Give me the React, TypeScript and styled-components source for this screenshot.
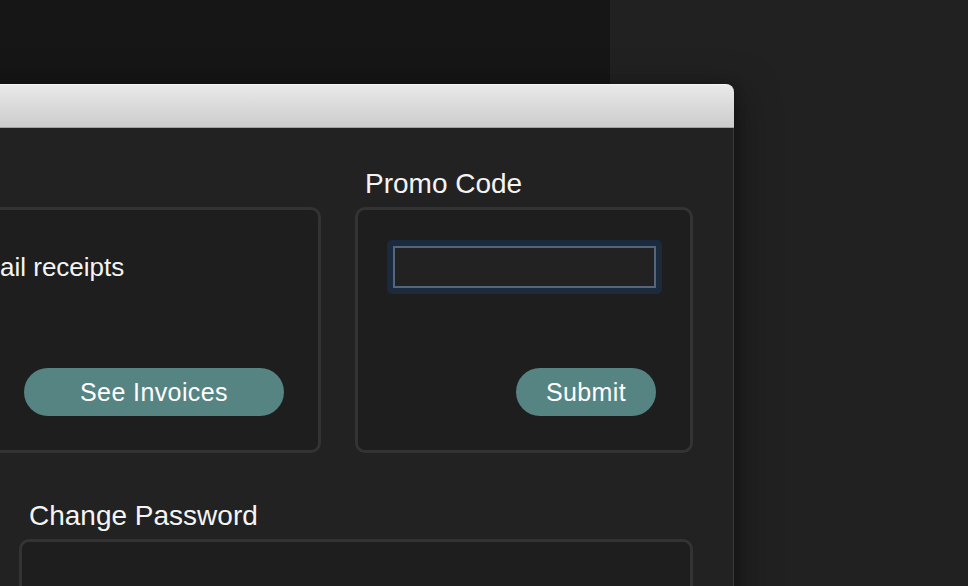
import React from "react";
import styled, { createGlobalStyle } from "styled-components";

const GlobalStyle = createGlobalStyle`
  html, body {
    margin: 0;
    padding: 0;
    width: 100%;
    height: 100%;
    overflow: hidden;
    background: #212121;
  }
  body {
    font-family: "Liberation Sans", Arial, Helvetica, sans-serif;
  }
  #root {
    width: 100%;
    height: 100%;
  }
  * { box-sizing: border-box; }
`;

const Desktop = styled.div`
  position: relative;
  width: 968px;
  height: 586px;
  display: flex;
  overflow: hidden;
`;

const BackPane = styled.div<{ $tone: string; $width?: string }>`
  background: ${(p) => p.$tone};
  flex: ${(p) => (p.$width ? `0 0 ${p.$width}` : "1 1 auto")};
  height: 100%;
`;

const Window = styled.div`
  position: absolute;
  top: 84px;
  left: -153px;
  width: 887px;
  height: 560px;
  display: flex;
  flex-direction: column;
  border-radius: 8px 8px 0 0;
  box-shadow: 6px 8px 40px rgba(0, 0, 0, 0.35), 2px 0 10px rgba(0, 0, 0, 0.25);
`;

const TitleBar = styled.div`
  height: 44px;
  flex: 0 0 auto;
  border-radius: 8px 8px 0 0;
  background: linear-gradient(#e9e9e9, #d9d9d9 55%, #cdcdcd);
  border-top: 1px solid #f4f4f4;
  border-bottom: 1px solid #a3a3a3;
`;

const Body = styled.div`
  flex: 1 1 auto;
  background: #222222;
  border-right: 1px solid #3a3a3a;
  padding: 40px 40px 0 40px;
  display: flex;
  flex-direction: column;
`;

const TopRow = styled.div`
  display: grid;
  grid-template-columns: 1fr 338px;
  column-gap: 34px;
`;

const Section = styled.section<{ $indent?: number; $top?: number }>`
  display: flex;
  flex-direction: column;
  margin-left: ${(p) => p.$indent ?? 0}px;
  margin-top: ${(p) => p.$top ?? 0}px;
`;

const Label = styled.h2`
  margin: 0 0 7px 0;
  padding-left: 10px;
  height: 32px;
  font-size: 28px;
  line-height: 32px;
  font-weight: 400;
  color: #f4f4f4;
  white-space: nowrap;
`;

const Card = styled.div<{ $height?: number }>`
  height: ${(p) => (p.$height ? `${p.$height}px` : "auto")};
  background: #1e1e1e;
  border: 3px solid #333333;
  border-radius: 10px;
  padding: 36px 34px 34px 35px;
  display: flex;
  flex-direction: column;
  justify-content: space-between;
`;

const OptionRow = styled.label`
  height: 42px;
  display: flex;
  align-items: center;
  gap: 14px;
  font-size: 26px;
  line-height: 32px;
  color: #f4f4f4;
  white-space: nowrap;
`;

const CheckBox = styled.span`
  width: 22px;
  height: 22px;
  border-radius: 4px;
  border: 2px solid #5a5a5a;
  background: #2a2a2a;
  flex: 0 0 auto;
`;

const RingWrap = styled.div`
  margin: -6px;
  padding: 6px;
  border-radius: 5px;
  background: #1b2a3c;
`;

const TextInput = styled.input`
  display: block;
  width: 100%;
  height: 42px;
  margin: 0;
  border: 2px solid #56657b;
  border-radius: 0;
  background: #222222;
  color: #f4f4f4;
  font-family: inherit;
  font-size: 20px;
  padding: 0 8px;
  outline: none;
`;

const PillButton = styled.button<{ $width: number }>`
  align-self: flex-end;
  width: ${(p) => p.$width}px;
  height: 48px;
  border: none;
  border-radius: 24px;
  background: #568483;
  color: #ffffff;
  font-family: "Liberation Sans", Arial, Helvetica, sans-serif;
  font-size: 25px;
  letter-spacing: 0.4px;
  padding: 0;
  cursor: pointer;
`;

export default function App() {
  return (
    <>
      <GlobalStyle />
      <Desktop>
        <BackPane $tone="#161616" $width="610px" />
        <BackPane $tone="#212121" />
        <Window>
          <TitleBar />
          <Body>
            <TopRow>
              <Section>
                <Label aria-hidden="true">{"\u00a0"}</Label>
                <Card $height={246}>
                  <OptionRow>
                    <CheckBox />
                    Email receipts
                  </OptionRow>
                  <PillButton $width={260}>See Invoices</PillButton>
                </Card>
              </Section>
              <Section>
                <Label>Promo Code</Label>
                <Card $height={246}>
                  <RingWrap>
                    <TextInput type="text" aria-label="Promo Code" />
                  </RingWrap>
                  <PillButton $width={140}>Submit</PillButton>
                </Card>
              </Section>
            </TopRow>
            <Section $indent={132} $top={47}>
              <Label>Change Password</Label>
              <Card $height={200} />
            </Section>
          </Body>
        </Window>
      </Desktop>
    </>
  );
}
